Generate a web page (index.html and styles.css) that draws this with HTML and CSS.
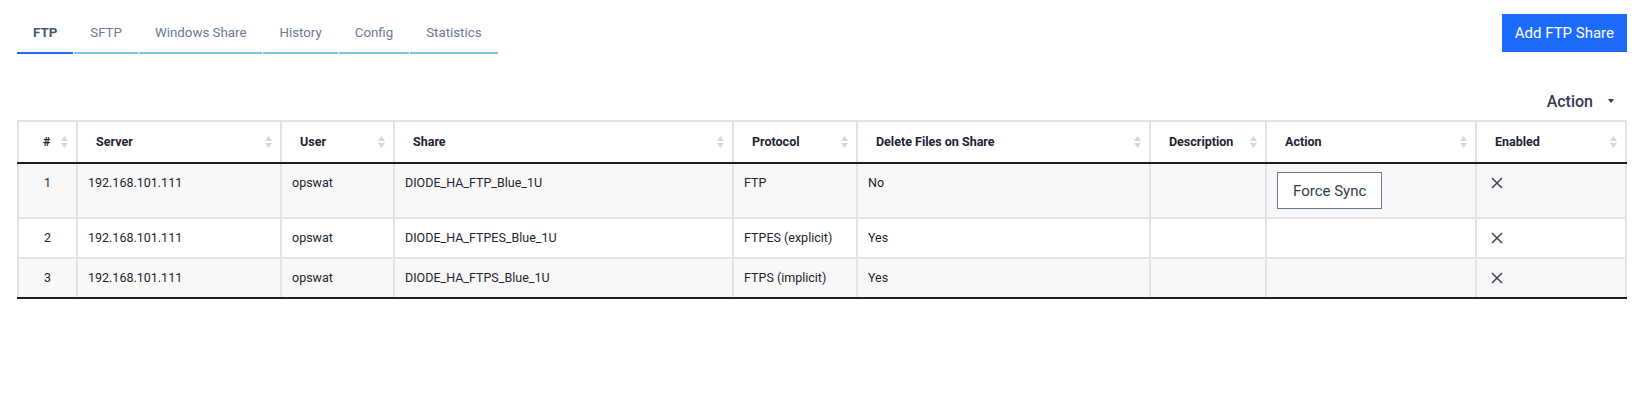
FILE: index.html
```html
<!DOCTYPE html>
<html lang="en">

<head>
    <meta charset="UTF-8">
    <meta name="viewport" content="width=device-width, initial-scale=1.0">
    <title>FTP Shares</title>

    <link rel="stylesheet" href="styles.css">
</head>

<body>
    <div class="page">
        <div class="topbar">
            <ul class="tabs">
                <li class="tab active">FTP</li>
                <li class="tab">SFTP</li>
                <li class="tab">Windows Share</li>
                <li class="tab">History</li>
                <li class="tab">Config</li>
                <li class="tab">Statistics</li>
            </ul>
            <button class="add-btn">Add FTP Share</button>
        </div>

        <div class="actionbar">
            <span class="action-label">Action</span>
            <span class="caret"></span>
        </div>

        <table class="shares">
            <colgroup>
                <col style="width: 59px">
                <col style="width: 204px">
                <col style="width: 113px">
                <col style="width: 339px">
                <col style="width: 124px">
                <col style="width: 293px">
                <col style="width: 116px">
                <col style="width: 210px">
                <col>
            </colgroup>
            <thead>
                <tr>
                    <th class="num-head"><div class="th-inner"><span>#</span><svg class="sort" viewBox="0 0 7 12"><path d="M0 5 3.5 0 7 5z M0 7 7 7 3.5 12z"/></svg></div></th>
                    <th><div class="th-inner"><span>Server</span><svg class="sort" viewBox="0 0 7 12"><path d="M0 5 3.5 0 7 5z M0 7 7 7 3.5 12z"/></svg></div></th>
                    <th><div class="th-inner"><span>User</span><svg class="sort" viewBox="0 0 7 12"><path d="M0 5 3.5 0 7 5z M0 7 7 7 3.5 12z"/></svg></div></th>
                    <th><div class="th-inner"><span>Share</span><svg class="sort" viewBox="0 0 7 12"><path d="M0 5 3.5 0 7 5z M0 7 7 7 3.5 12z"/></svg></div></th>
                    <th><div class="th-inner"><span>Protocol</span><svg class="sort" viewBox="0 0 7 12"><path d="M0 5 3.5 0 7 5z M0 7 7 7 3.5 12z"/></svg></div></th>
                    <th><div class="th-inner"><span>Delete Files on Share</span><svg class="sort" viewBox="0 0 7 12"><path d="M0 5 3.5 0 7 5z M0 7 7 7 3.5 12z"/></svg></div></th>
                    <th><div class="th-inner"><span>Description</span><svg class="sort" viewBox="0 0 7 12"><path d="M0 5 3.5 0 7 5z M0 7 7 7 3.5 12z"/></svg></div></th>
                    <th><div class="th-inner"><span>Action</span><svg class="sort" viewBox="0 0 7 12"><path d="M0 5 3.5 0 7 5z M0 7 7 7 3.5 12z"/></svg></div></th>
                    <th><div class="th-inner"><span>Enabled</span><svg class="sort" viewBox="0 0 7 12"><path d="M0 5 3.5 0 7 5z M0 7 7 7 3.5 12z"/></svg></div></th>
                </tr>
            </thead>
            <tbody>
                <tr>
                    <td class="num">1</td>
                    <td>192.168.101.111</td>
                    <td>opswat</td>
                    <td>DIODE_HA_FTP_Blue_1U</td>
                    <td>FTP</td>
                    <td>No</td>
                    <td></td>
                    <td class="btn-cell"><button class="sync-btn">Force Sync</button></td>
                    <td><svg class="cross" viewBox="0 0 14 14"><path d="M2 2 12 12 M12 2 2 12"/></svg></td>
                </tr>
                <tr>
                    <td class="num">2</td>
                    <td>192.168.101.111</td>
                    <td>opswat</td>
                    <td>DIODE_HA_FTPES_Blue_1U</td>
                    <td>FTPES (explicit)</td>
                    <td>Yes</td>
                    <td></td>
                    <td></td>
                    <td><svg class="cross" viewBox="0 0 14 14"><path d="M2 2 12 12 M12 2 2 12"/></svg></td>
                </tr>
                <tr>
                    <td class="num">3</td>
                    <td>192.168.101.111</td>
                    <td>opswat</td>
                    <td>DIODE_HA_FTPS_Blue_1U</td>
                    <td>FTPS (implicit)</td>
                    <td>Yes</td>
                    <td></td>
                    <td></td>
                    <td><svg class="cross" viewBox="0 0 14 14"><path d="M2 2 12 12 M12 2 2 12"/></svg></td>
                </tr>
            </tbody>
        </table>
    </div>
</body>

</html>
```

FILE: styles.css
```css
body {
    margin: 0;
    background: #fff;
    font-family: Roboto, "Liberation Sans", Arial, sans-serif;
    color: #222533;
}

.page {
    padding: 0 8px 0 17px;
}

.topbar {
    display: flex;
    justify-content: space-between;
    align-items: flex-start;
    padding-top: 14px;
}

.tabs {
    display: flex;
    gap: 1px;
    list-style: none;
    margin: 0;
    padding: 0;
}

.tab {
    padding: 11px 16px;
    font-size: 13.3px;
    line-height: 16px;
    color: #6b7899;
    border-bottom: 2px solid #7fc2db;
}

.tab.active {
    font-weight: 700;
    color: #4d5675;
    border-bottom-color: #1d6bfc;
}

.add-btn {
    height: 38px;
    padding: 0 13px;
    border: none;
    background: #1d6bfc;
    color: #fff;
    font-family: inherit;
    font-size: 15px;
}

.actionbar {
    display: flex;
    justify-content: flex-end;
    align-items: center;
    height: 20px;
    margin: 37px 0 9px;
    padding-right: 13px;
}

.action-label {
    font-size: 16px;
    font-weight: 500;
    color: #313a52;
}

.caret {
    margin-left: 15px;
    border-left: 3.5px solid transparent;
    border-right: 3.5px solid transparent;
    border-top: 4px solid #313a52;
}

.shares {
    width: 100%;
    table-layout: fixed;
    border-collapse: collapse;
    border: 2px solid #e1e3e8;
    border-bottom: 2px solid #1c1e24;
    font-size: 12.5px;
    line-height: 18px;
}

.shares th {
    padding: 11px 8px 11px 18px;
    border: 2px solid #e1e3e8;
    border-bottom: 2px solid #1c1e24;
    font-weight: 700;
    text-align: left;
    color: #1e2233;
    background: #fff;
}

.shares th.num-head {
    padding-left: 24px;
}

.th-inner {
    display: flex;
    justify-content: space-between;
    align-items: center;
}

.sort {
    width: 7px;
    height: 12px;
    flex: none;
    fill: #d3d6dc;
}

.shares td {
    padding: 10px 10px;
    border: 2px solid #e1e3e8;
    vertical-align: top;
    color: #22242e;
}

.shares tbody tr:nth-child(odd) td {
    background: #f8f8f9;
}

.shares tbody tr:last-child td {
    border-bottom: 2px solid #1c1e24;
}

.shares td.num {
    text-align: center;
}

.shares td.btn-cell {
    padding-top: 8px;
    padding-bottom: 8px;
}

.sync-btn {
    height: 37px;
    padding: 0 15px;
    border: 1px solid #6b7899;
    background: #fff;
    color: #313a52;
    font-family: inherit;
    font-size: 15px;
}

.cross {
    display: block;
    width: 14px;
    height: 14px;
    margin: 2px 0 0 3px;
    stroke: #3f475f;
    stroke-width: 1.6;
    fill: none;
}
```
